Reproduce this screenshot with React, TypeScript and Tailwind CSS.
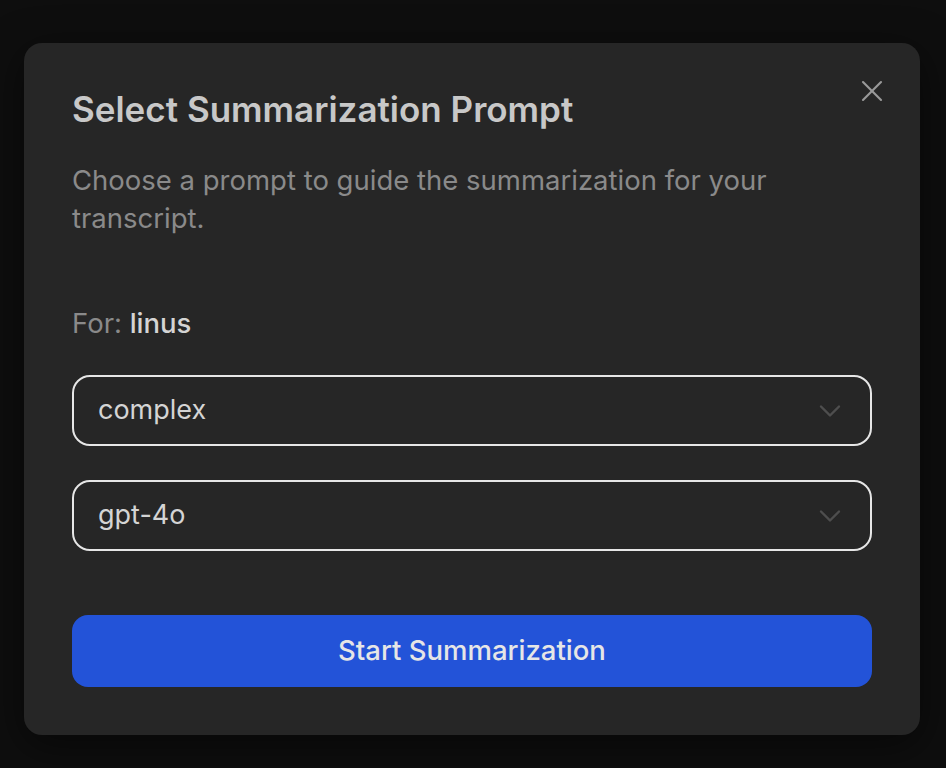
import { X, ChevronDown } from 'lucide-react';

function Select({ value }: { value: string }) {
  return (
    <div className="flex h-[71px] items-center justify-between rounded-[18px] border-2 border-[#e6e6e6] pl-[24px] pr-[22px]">
      <span className="text-[27px] text-[#d4d4d4]">{value}</span>
      <ChevronDown className="h-[36px] w-[36px] text-[#4e4e4e]" strokeWidth={1.6} />
    </div>
  );
}

export default function App() {
  return (
    <div
      className="flex min-h-[768px] items-start bg-[#0e0e0e] pl-[24px] pt-[43px]"
      style={{ fontFamily: 'Inter, "Noto Sans", sans-serif' }}
    >
      <div className="relative w-[896px] rounded-[18px] bg-[#262626] px-12 pb-12 pt-[44px] shadow-[0_10px_40px_rgba(0,0,0,0.5)]">
        <button className="absolute right-[30px] top-[30px] text-[#9a9a9a]">
          <X className="h-[36px] w-[36px]" strokeWidth={1.4} />
        </button>
        <h2 className="text-[35px] font-semibold leading-[44px] text-[#c8c8c8]">Select Summarization Prompt</h2>
        <p className="mt-[30px] text-[27.5px] leading-[38px] text-[#8a8a8a]">
          Choose a prompt to guide the summarization for your transcript.
        </p>
        <div className="mt-[70px] text-[27.5px] leading-[32px] text-[#8a8a8a]">
          For: <span className="font-medium text-[#d4d4d4]">linus</span>
        </div>
        <div className="mt-[36px] flex flex-col gap-[34px]">
          <Select value="complex" />
          <Select value="gpt-4o" />
        </div>
        <button className="mt-[64px] flex h-[72px] w-full items-center justify-center rounded-[16px] bg-[#2353d8] text-[27.5px] font-medium text-[#e6e6e6]">
          Start Summarization
        </button>
      </div>
    </div>
  );
}
